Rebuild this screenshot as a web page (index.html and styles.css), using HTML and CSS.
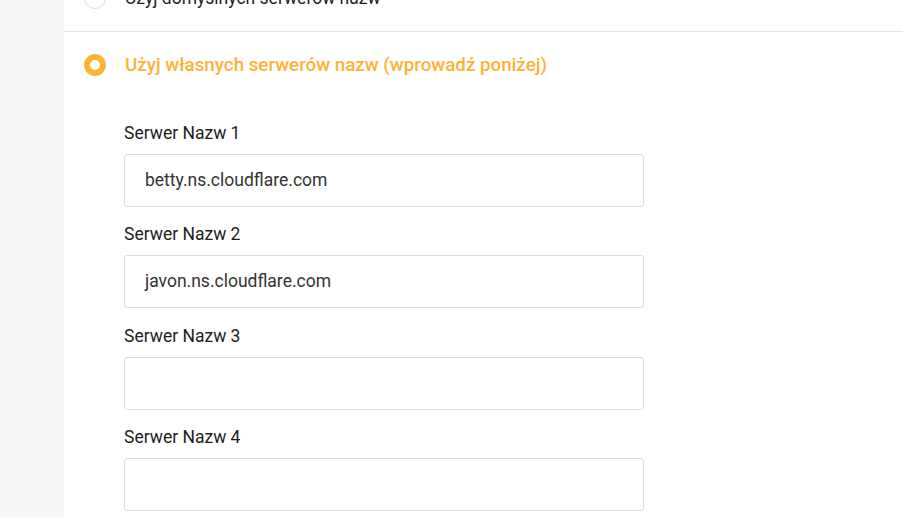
FILE: index.html
```html
<!DOCTYPE html>
<html lang="pl">
<head>
<meta charset="utf-8">
<title>Serwery nazw</title>
<link rel="stylesheet" href="styles.css">
</head>
<body>
<div class="page">
  <aside class="sidebar"></aside>
  <main class="panel">
    <div class="option option-first">
      <span class="radio"></span>
      <span class="option-text">Użyj domyślnych serwerów nazw</span>
    </div>
    <div class="option option-active">
      <span class="radio radio-checked"></span>
      <span class="option-text">Użyj własnych serwerów nazw (wprowadź poniżej)</span>
    </div>
    <div class="fields">
      <div class="field">
        <label class="label">Serwer Nazw 1</label>
        <div class="input">betty.ns.cloudflare.com</div>
      </div>
      <div class="field">
        <label class="label">Serwer Nazw 2</label>
        <div class="input">javon.ns.cloudflare.com</div>
      </div>
      <div class="field">
        <label class="label">Serwer Nazw 3</label>
        <div class="input"></div>
      </div>
      <div class="field">
        <label class="label">Serwer Nazw 4</label>
        <div class="input"></div>
      </div>
    </div>
  </main>
</div>
</body>
</html>
```

FILE: styles.css
```css
html, body {
  margin: 0;
  padding: 0;
  height: 100%;
  overflow: hidden;
}
body {
  font-family: Roboto, "Liberation Sans", Arial, sans-serif;
  background: #ffffff;
  color: #222222;
}
.page {
  display: flex;
  height: 517px;
}
.sidebar {
  width: 64px;
  flex: none;
  background: #f5f6f8;
}
.panel {
  flex: 1;
  background: #ffffff;
  display: flex;
  flex-direction: column;
}
.option {
  display: flex;
  align-items: center;
  gap: 19px;
  padding-left: 20px;
  box-sizing: border-box;
}
.option-first {
  margin-top: -38px;
  border-bottom: 1px solid #e6e6e6;
  height: 70px;
  padding-top: 2px;
}
.option-active {
  padding-top: 22px;
}
.radio {
  width: 22px;
  height: 22px;
  box-sizing: border-box;
  border-radius: 50%;
  border: 1px solid #dcdcdc;
  background: #fff;
  flex: none;
}
.radio-checked {
  border: 6px solid #ffb235;
}
.option-text {
  font-size: 17.5px;
  color: #222;
}
.option-active .option-text {
  font-size: 18.75px;
  color: #ffb235;
  font-weight: 500;
}
.fields {
  padding-left: 60px;
  padding-top: 45px;
  display: flex;
  flex-direction: column;
  gap: 15.33px;
}
.field {
  display: flex;
  flex-direction: column;
}
.label {
  font-size: 17.5px;
  line-height: 24px;
  color: #1e1e1e;
  margin-bottom: 9px;
}
.input {
  width: 520px;
  height: 53px;
  box-sizing: border-box;
  border: 1px solid #dedede;
  border-radius: 3px;
  padding-left: 20px;
  font-size: 17.5px;
  line-height: 51px;
  color: #333;
}
```
